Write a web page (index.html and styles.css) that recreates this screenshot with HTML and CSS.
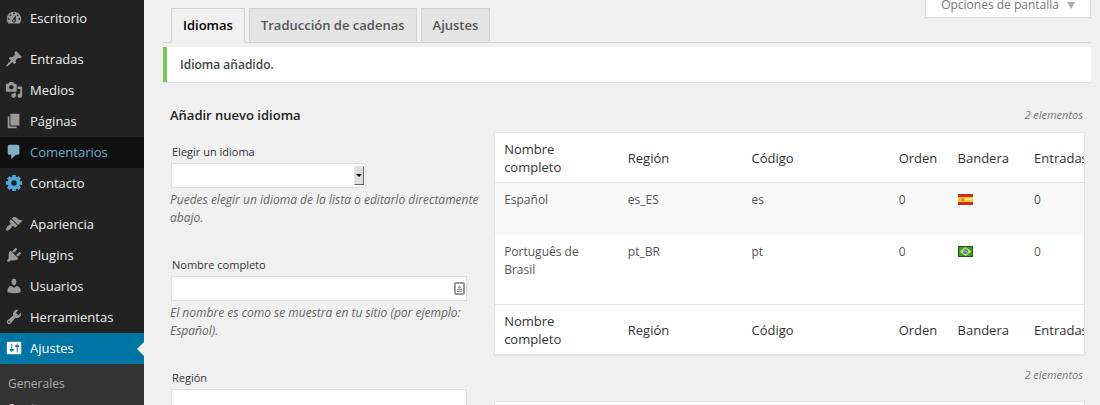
FILE: index.html
```html
<!DOCTYPE html>
<html lang="es">
<head>
<meta charset="utf-8">
<meta name="viewport" content="width=device-width, initial-scale=1">
<title>Idiomas</title>
<link rel="stylesheet" href="styles.css">
</head>
<body>
<div class="admin">
  <nav class="menu" aria-label="Menú principal">
    <ul class="menu-group">
      <li><a class="menu-item" href="#"><svg class="icon" viewBox="0 0 20 20"><path d="M3.76 16h12.48c1.1-1.37 1.76-3.11 1.76-5 0-4.42-3.58-8-8-8s-8 3.58-8 8c0 1.89.66 3.63 1.76 5zM10 4c.55 0 1 .45 1 1s-.45 1-1 1-1-.45-1-1 .45-1 1-1zM6 6c.55 0 1 .45 1 1s-.45 1-1 1-1-.45-1-1 .45-1 1-1zm8 0c.55 0 1 .45 1 1s-.45 1-1 1-1-.45-1-1 .45-1 1-1zm-5.37 5.55L12 7v6c0 1.1-.9 2-2 2s-2-.9-2-2c0-.57.24-1.08.63-1.45zM4 10c.55 0 1 .45 1 1s-.45 1-1 1-1-.45-1-1 .45-1 1-1zm12 0c.55 0 1 .45 1 1s-.45 1-1 1-1-.45-1-1 .45-1 1-1zm-5 3c0-.55-.45-1-1-1s-1 .45-1 1 .45 1 1 1 1-.45 1-1z"/></svg>Escritorio</a></li>
    </ul>
    <ul class="menu-group">
      <li><a class="menu-item" href="#"><svg class="icon" viewBox="0 0 20 20"><path d="M10.44 3.02l1.82-1.82 6.36 6.35-1.83 1.82c-1.05-.68-2.48-.57-3.41.36l-.75.75c-.92.93-1.04 2.35-.35 3.41l-1.83 1.82-2.41-2.41-2.8 2.79c-.42.42-3.38 2.71-3.8 2.29s1.86-3.39 2.28-3.81l2.79-2.79L4.1 9.36l1.83-1.82c1.05.69 2.48.57 3.4-.36l.75-.75c.93-.92 1.05-2.35.36-3.41z"/></svg>Entradas</a></li>
      <li><a class="menu-item" href="#"><svg class="icon" viewBox="0 0 20 20"><path d="M13 11V4c0-.55-.45-1-1-1h-1.67L9 1H5L3.67 3H2c-.55 0-1 .45-1 1v7c0 .55.45 1 1 1h10c.55 0 1-.45 1-1zM7 4.5c1.38 0 2.5 1.12 2.5 2.5S8.38 9.5 7 9.5 4.5 8.38 4.5 7 5.62 4.5 7 4.5zM14 6h5v10.5c0 1.38-1.12 2.5-2.5 2.5S14 17.88 14 16.5s1.12-2.5 2.5-2.5c.17 0 .34.02.5.05V9h-3V6zm-4 8.05V13h2v3.5c0 1.38-1.12 2.5-2.5 2.5S7 17.88 7 16.5 8.12 14 9.5 14c.17 0 .34.02.5.05z"/></svg>Medios</a></li>
      <li><a class="menu-item" href="#"><svg class="icon" viewBox="0 0 20 20"><path d="M6 15V2h10v13H6zm-1 1h8v2H3V5h2v11z"/></svg>Páginas</a></li>
      <li><a class="menu-item is-hovered" href="#"><svg class="icon" viewBox="0 0 20 20"><path d="M5 2h9c1.1 0 2 .9 2 2v7c0 1.1-.9 2-2 2h-2l-5 5v-5H5c-1.1 0-2-.9-2-2V4c0-1.1.9-2 2-2z"/></svg>Comentarios</a></li>
      <li><a class="menu-item" href="#"><svg class="icon icon-contact" viewBox="0 0 20 20"><g class="gear-teeth"><path d="M10 1v18M1 10h18M3.6 3.6l12.8 12.8M16.4 3.6L3.6 16.4"/></g><circle class="gear-body" cx="10" cy="10" r="6.6"/><circle class="gear-ring" cx="10" cy="10" r="5"/></svg>Contacto</a></li>
    </ul>
    <ul class="menu-group">
      <li><a class="menu-item" href="#"><svg class="icon" viewBox="0 0 20 20"><path d="M14.48 11.06L7.41 3.99l1.5-1.5c.5-.56 2.3-.47 3.51.32 1.21.8 1.43 1.28 2.91 2.1 1.18.64 2.45 1.26 4.45.85zm-.71.71L6.7 4.7 4.93 6.47c-.39.39-.39 1.02 0 1.41l1.06 1.06c.39.39.39 1.03 0 1.42-.6.6-1.43 1.11-2.21 1.69-.35.26-.7.53-1.01.84C1.43 14.23.4 16.08 1.4 17.07c.99 1 2.84-.03 4.18-1.36.31-.31.58-.66.85-1.02.57-.78 1.08-1.61 1.69-2.21.39-.39 1.02-.39 1.41 0l1.06 1.06c.39.39 1.02.39 1.41 0z"/></svg>Apariencia</a></li>
      <li><a class="menu-item" href="#"><svg class="icon" viewBox="0 0 20 20"><path d="M13.11 4.36L9.87 7.6 8 5.73l3.24-3.24c.35-.34 1.05-.2 1.56.32.52.51.66 1.21.31 1.55zm-8 1.77l.91-1.12 9.01 9.01-1.19.84c-.71.71-2.63 1.16-3.82 1.16H6.14L4.9 17.26c-.59.59-1.54.59-2.12 0-.59-.58-.59-1.53 0-2.12l1.24-1.24v-3.88c0-1.13.4-3.19 1.09-3.89zm7.26 3.97l3.24-3.24c.34-.35 1.04-.21 1.55.31.52.51.66 1.21.31 1.55l-3.24 3.25z"/></svg>Plugins</a></li>
      <li><a class="menu-item" href="#"><svg class="icon" viewBox="0 0 20 20"><path d="M10 9.25c-2.27 0-2.73-3.44-2.73-3.44C7 4.02 7.82 2 9.97 2c2.16 0 2.98 2.02 2.71 3.81 0 0-.41 3.44-2.68 3.44zm0 2.57L12.72 10c2.39 0 4.52 2.33 4.52 4.53v2.49s-3.65 1.13-7.24 1.13c-3.65 0-7.24-1.13-7.24-1.13v-2.49c0-2.25 1.94-4.48 4.47-4.48z"/></svg>Usuarios</a></li>
      <li><a class="menu-item" href="#"><svg class="icon" viewBox="0 0 20 20"><path d="M16.68 9.77c-1.34 1.34-3.3 1.67-4.95.99l-5.41 6.52c-.99.99-2.59.99-3.58 0s-.99-2.59 0-3.57l6.52-5.42c-.68-1.65-.35-3.61.99-4.95 1.28-1.28 3.12-1.62 4.72-1.06l-2.89 2.89 2.82 2.82 2.86-2.87c.53 1.58.18 3.39-1.08 4.65zM3.81 16.21c.4.39 1.04.39 1.43 0 .4-.4.4-1.04 0-1.43-.39-.4-1.03-.4-1.43 0-.39.39-.39 1.03 0 1.43z"/></svg>Herramientas</a></li>
      <li><a class="menu-item is-current" href="#" aria-current="page"><svg class="icon" viewBox="0 0 20 20"><path d="M18 16V4c0-.55-.45-1-1-1H3c-.55 0-1 .45-1 1v12c0 .55.45 1 1 1h14c.55 0 1-.45 1-1zM8 11h1c.55 0 1 .45 1 1s-.45 1-1 1H8v1.5c0 .28-.22.5-.5.5s-.5-.22-.5-.5V13H6c-.55 0-1-.45-1-1s.45-1 1-1h1V5.5c0-.28.22-.5.5-.5s.5.22.5.5V11zm5-2h-1c-.55 0-1-.45-1-1s.45-1 1-1h1V5.5c0-.28.22-.5.5-.5s.5.22.5.5V7h1c.55 0 1 .45 1 1s-.45 1-1 1h-1v5.5c0 .28-.22.5-.5.5s-.5-.22-.5-.5V9z"/></svg>Ajustes</a>
        <ul class="submenu">
          <li><a class="submenu-item" href="#">Generales</a></li>
          <li><a class="submenu-item" href="#">Escritura</a></li>
        </ul>
      </li>
    </ul>
  </nav>

  <main class="content">
    <header class="page-head">
      <nav class="tabs" aria-label="Secciones">
        <a class="tab is-active" href="#" aria-current="page">Idiomas</a>
        <a class="tab" href="#">Traducción de cadenas</a>
        <a class="tab" href="#">Ajustes</a>
      </nav>
      <button class="screen-options" type="button">Opciones de pantalla<svg class="caret" viewBox="0 0 8 7"><path d="M0 0h8L4 7z"/></svg></button>
    </header>

    <p class="notice" role="status">Idioma añadido.</p>

    <div class="columns">
      <form class="language-form">
        <h2 class="form-title">Añadir nuevo idioma</h2>
        <div class="field">
          <label class="label" for="lang">Elegir un idioma</label>
          <div class="select-box">
            <select class="control" id="lang"><option></option></select>
            <span class="select-button"></span>
          </div>
          <p class="help">Puedes elegir un idioma de la lista o editarlo directamente abajo.</p>
        </div>
        <div class="field">
          <label class="label" for="name">Nombre completo</label>
          <div class="input-box">
            <input class="control" id="name" type="text">
            <svg class="autofill" viewBox="0 0 11 13"><rect class="autofill-frame" x="1" y="1" width="9" height="11" rx="1"/><path d="M5.5 3L7.500 6.500h-4zM3 7h5v1H3zM3 9h5v1H3z"/></svg>
          </div>
          <p class="help">El nombre es como se muestra en tu sitio (por ejemplo: Español).</p>
        </div>
        <div class="field">
          <label class="label" for="locale">Región</label>
          <div class="input-box">
            <input class="control" id="locale" type="text">
          </div>
        </div>
      </form>

      <section class="language-list" aria-label="Idiomas">
        <p class="count">2 elementos</p>
        <div class="panel">
          <table class="table">
            <colgroup><col class="col-name"><col class="col-locale"><col class="col-code"><col class="col-order"><col class="col-flag"><col class="col-posts"></colgroup>
            <thead>
              <tr><th scope="col">Nombre completo</th><th scope="col">Región</th><th scope="col">Código</th><th scope="col">Orden</th><th scope="col">Bandera</th><th scope="col">Entradas</th></tr>
            </thead>
            <tbody>
              <tr><td>Español</td><td>es_ES</td><td>es</td><td>0</td>
                <td><svg class="flag" viewBox="0 0 15 11" role="img" aria-label="España"><path fill="#c8301c" d="M0 0h15v11H0z"/><path fill="#f7c62c" d="M0 3h15v5H0z"/><path fill="#fbe27a" d="M7 4h7v2H7z"/><path fill="#e0803a" d="M4 4h2v3H4z"/><path fill="#e9a05a" d="M3 4h1v3H3z"/></svg></td><td>0</td></tr>
              <tr><td>Português de Brasil</td><td>pt_BR</td><td>pt</td><td>0</td>
                <td><svg class="flag" viewBox="0 0 15 11" role="img" aria-label="Brasil"><path fill="#1c5c14" d="M0 0h15v11H0z"/><path fill="#3f9a25" d="M1 1h13v9H1z"/><path fill="#c5dc6a" d="M7.500 1l6 4.500-6 4.500-6-4.500z"/><circle cx="7.500" cy="5.500" r="2.500" fill="#4c7eb0"/><path fill="none" stroke="#c9dff0" stroke-width=".8" d="M5.300 4.800q2.500-.3 4.200 1.700"/></svg></td><td>0</td></tr>
            </tbody>
            <tfoot>
              <tr><th scope="col">Nombre completo</th><th scope="col">Región</th><th scope="col">Código</th><th scope="col">Orden</th><th scope="col">Bandera</th><th scope="col">Entradas</th></tr>
            </tfoot>
          </table>
        </div>
        <p class="count">2 elementos</p>
        <div class="panel panel-extra"></div>
      </section>
    </div>
  </main>
</div>
</body>
</html>
```
FILE: styles.css
```css
* {
  box-sizing: border-box;
}

body {
  margin: 0;
  height: 100vh;
  overflow: hidden;
  background: #f0f0f0;
  color: #444;
  font: 12px/18px "Open Sans", "Noto Sans", sans-serif;
}

ul,
p,
h2 {
  margin: 0;
  padding: 0;
  list-style: none;
}

a {
  color: inherit;
  text-decoration: none;
}

.admin {
  display: flex;
  height: 100%;
}

/* Side menu */
.menu {
  flex: 0 0 144px;
  display: flex;
  flex-direction: column;
  gap: 10px;
  padding-top: 3px;
  background: #222;
  color: #eee;
}

.menu-item {
  position: relative;
  display: flex;
  align-items: center;
  gap: 7px;
  height: 31px;
  padding: 0 0 1px 5px;
  font-size: 13px;
}

.icon {
  width: 18px;
  height: 18px;
  fill: #999;
}

.is-hovered {
  background: #111;
  color: #68adcb;
}

.is-hovered .icon {
  fill: #82b2c8;
}

.icon-contact {
  fill: none;
  stroke: #4fa9d6;
}

.gear-teeth {
  stroke-width: 4;
}

.gear-body {
  fill: #222;
  stroke: none;
}

.gear-ring {
  stroke-width: 4;
}

.is-current {
  background: #0074a2;
  color: #fff;
}

.is-current .icon {
  fill: #fff;
}

.is-current::after {
  content: "";
  position: absolute;
  right: 0;
  top: 50%;
  margin-top: -7px;
  border: 7px solid transparent;
  border-left-width: 0;
  border-right-color: #f0f0f0;
}

.submenu {
  padding-top: 8px;
  background: #333;
}

.submenu-item {
  display: block;
  padding: 3px 8px 4px;
  color: #aaa;
}

/* Page header */
.content {
  flex: 1;
  min-width: 0;
  padding: 0 9px 0 19px;
}

.page-head {
  display: flex;
  justify-content: space-between;
  align-items: flex-start;
  padding-left: 8px;
  border-bottom: 1px solid #d2d2d2;
}

.tabs {
  display: flex;
  gap: 4px;
  margin-bottom: -1px;
  padding-top: 8px;
}

.tab {
  padding: 7px 11px;
  border: 1px solid #d2d2d2;
  background: #e4e4e4;
  color: #555;
  font-size: 13px;
  font-weight: 600;
  line-height: 19px;
}

.is-active {
  border-bottom-color: #f0f0f0;
  background: #f0f0f0;
  color: #000;
}

.screen-options {
  display: flex;
  align-items: center;
  gap: 8px;
  padding: 0 15px 7px;
  border: 1px solid #ddd;
  border-top: 0;
  background: #fff;
  color: #777;
  font: 12px/10px "Open Sans", "Noto Sans", sans-serif;
}

.caret {
  width: 8px;
  height: 7px;
  fill: #aaa;
}

.notice {
  margin-top: 4px;
  padding: 9px 13px 8px;
  border-left: 4px solid #7ac64f;
  background: #fff;
  box-shadow: 0 1px 1px #ddd;
  font-weight: 600;
}

/* Two-column body */
.columns {
  display: grid;
  grid-template-columns: minmax(0, 35fr) minmax(0, 65fr);
  gap: 6px;
  padding: 24px 6px 0 7px;
}

.form-title {
  color: #222;
  font-size: 13px;
  font-weight: 600;
  line-height: 18px;
}

.field {
  margin-top: 19px;
}

.field + .field {
  margin-top: 29px;
}

.label {
  display: block;
  padding: 0 2px 2px;
  color: #333;
  font-size: 11px;
}

.select-box,
.input-box {
  position: relative;
  width: 296px;
  max-width: 100%;
  margin-left: 1px;
}

.select-box {
  width: 195px;
}

.control {
  display: block;
  width: 100%;
  height: 25px;
  border: 1px solid #ddd;
  border-radius: 0;
  background: #fff;
  appearance: none;
}

.select-button {
  position: absolute;
  top: 3px;
  right: 2px;
  bottom: 3px;
  display: flex;
  align-items: center;
  justify-content: center;
  width: 10px;
  border: 1px solid #e4e4e4;
  border-right-color: #666;
  border-bottom-color: #666;
  background: #ddd;
  pointer-events: none;
}

.select-button::after {
  content: "";
  border: 3px solid transparent;
  border-top-color: #000;
  border-bottom-width: 0;
}

.autofill {
  position: absolute;
  top: 6px;
  right: 2px;
  width: 11px;
  height: 13px;
  fill: #999;
}

.autofill-frame {
  fill: none;
  stroke: #999;
  stroke-width: 2;
}

.help {
  padding-top: 3px;
  color: #666;
  font-style: italic;
}

/* Language table */
.count {
  padding-right: 2px;
  color: #777;
  font-size: 11px;
  font-style: italic;
  text-align: right;
}

.panel {
  margin-top: 8px;
  overflow: hidden;
  border: 1px solid #e5e5e5;
  background: #fff;
  box-shadow: 0 1px 1px #e4e4e4;
}

.panel + .count {
  margin-top: 11px;
}

.panel-extra {
  height: 40px;
  margin-top: 17px;
}

.table {
  width: 100%;
  border-collapse: collapse;
  table-layout: fixed;
  text-align: left;
}

.col-name,
.col-locale {
  width: 21%;
}

.col-code {
  width: 25%;
}

.col-order {
  width: 10%;
}

.col-flag {
  width: 13%;
}

.col-posts {
  width: 10%;
}

th {
  padding: 7px 0 6px 9px;
  color: #333;
  font-size: 13px;
  font-weight: 400;
  line-height: 18px;
  vertical-align: middle;
}

th:first-child {
  padding-right: 18px;
}

thead th {
  border-bottom: 1px solid #e4e4e4;
}

tfoot th {
  border-top: 1px solid #e4e4e4;
}

td {
  height: 52px;
  padding: 8px 9px 25px;
  color: #555;
  vertical-align: top;
}

tbody tr:first-child {
  background: #f9f9f9;
}

.flag {
  display: block;
  width: 15px;
  height: 11px;
  margin-top: 3px;
}
```
